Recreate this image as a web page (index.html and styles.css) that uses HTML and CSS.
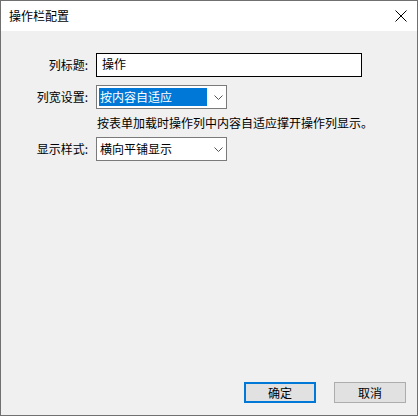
FILE: index.html
```html
<!DOCTYPE html>
<html lang="zh-CN">
<head>
<meta charset="utf-8">
<title>操作栏配置</title>
<link rel="stylesheet" href="styles.css">
</head>
<body>
<div class="window">
  <div class="titlebar">
    <span class="title">操作栏配置</span>
    <span class="close">
      <svg width="12" height="12" viewBox="0 0 12 12"><path d="M0.5 0.5 L11.5 11.5 M11.5 0.5 L0.5 11.5" stroke="#000" stroke-width="1" fill="none"/></svg>
    </span>
  </div>
  <div class="body">
    <div class="form">
      <label class="label">列标题:</label>
      <div class="textbox">操作</div>
      <label class="label">列宽设置:</label>
      <div class="combo"><span class="combo-value selected">按内容自适应</span><span class="chev"><svg width="9" height="5" viewBox="0 0 9 5"><path d="M0.5 0.5 L4.5 4.5 L8.5 0.5" stroke="#555" stroke-width="1" fill="none"/></svg></span></div>
      <div class="help">按表单加载时操作列中内容自适应撑开操作列显示。</div>
      <label class="label">显示样式:</label>
      <div class="combo"><span class="combo-value">横向平铺显示</span><span class="chev"><svg width="9" height="5" viewBox="0 0 9 5"><path d="M0.5 0.5 L4.5 4.5 L8.5 0.5" stroke="#555" stroke-width="1" fill="none"/></svg></span></div>
    </div>
    <div class="buttons">
      <button class="btn default">确定</button>
      <button class="btn">取消</button>
    </div>
  </div>
</div>
</body>
</html>
```
FILE: styles.css
```css
* { box-sizing: border-box; }
html, body { margin: 0; padding: 0; }
body {
  font-family: "Noto Sans CJK SC", "Noto Sans", sans-serif;
  font-size: 12px;
  color: #000;
  background: #f0f0f0;
}
.window {
  width: 418px;
  height: 416px;
  border: 1px solid #707070;
  display: flex;
  flex-direction: column;
  background: #f0f0f0;
}
.titlebar {
  height: 30px;
  background: #fff;
  display: flex;
  align-items: center;
  justify-content: space-between;
  padding: 0 8px 0 8px;
  flex: none;
}
.title { font-size: 12px; line-height: 14px; margin-top: 0px; }
.close { width: 12px; height: 12px; display: flex; margin-right: 2px; }
.body {
  flex: 1;
  display: flex;
  flex-direction: column;
  justify-content: space-between;
  padding: 22px 0 12px 0;
}
.form {
  display: grid;
  grid-template-columns: 87px 266px;
  column-gap: 8px;
  row-gap: 8px;
  align-items: center;
}
.label {
  justify-self: end;
  line-height: 14px;
}
.textbox {
  height: 24px;
  border: 1px solid #000;
  background: #fff;
  padding: 0 5px;
  line-height: 20px;
  font-size: 12px;
}
.combo {
  width: 131px;
  height: 24px;
  border: 1px solid #7a7a7a;
  background: #fff;
  display: flex;
  align-items: center;
  padding: 0 2px;
}
.combo-value {
  width: 108px;
  height: 18px;
  line-height: 18px;
  padding-left: 1px;
}
.combo-value.selected { background: #0078d7; color: #fff; }
.chev { display: flex; margin-left: 7px; }
.help {
  grid-column: 2;
  line-height: 12px;
  height: 12px;
  white-space: nowrap;
  margin-left: 1px;
}
.buttons {
  display: flex;
  justify-content: flex-end;
  gap: 18px;
  padding-right: 11px;
}
.btn {
  width: 72px;
  height: 21px;
  background: #e1e1e1;
  border: 1px solid #adadad;
  font-family: inherit;
  font-size: 12px;
  padding: 0;
  color: #000;
}
.btn.default { border: 2px solid #0078d7; }
```
